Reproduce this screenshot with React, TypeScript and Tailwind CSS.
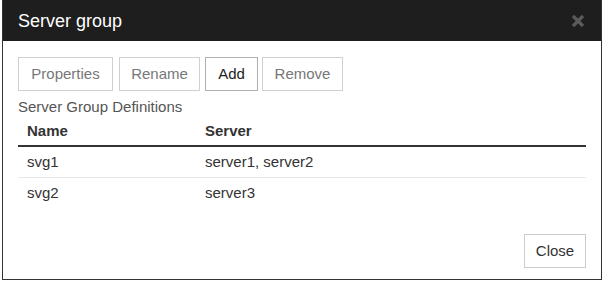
import React from "react";

export default function App() {
  const font = { fontFamily: '"Liberation Sans", Arial, sans-serif' };
  return (
    <div className="w-[604px] h-[282px] bg-white pl-[2px]" style={font}>
      <div className="w-[600px] h-[280px] border-x border-b border-[#333] flex flex-col bg-white">
        <div className="h-[41px] shrink-0 bg-[#1e1e1e] flex items-center justify-between pl-[15px] pr-[16px]">
          <span className="text-white text-[18px] leading-none">Server group</span>
          <svg width="14" height="14" viewBox="0 0 14 14" className="mt-[1px]">
            <path d="M2 2 L12 12 M12 2 L2 12" stroke="#5a5a5a" strokeWidth="3.2" strokeLinecap="butt" />
          </svg>
        </div>
        <div className="flex-1 flex flex-col px-[15px] pt-[16px]">
          <div className="flex">
            <button className="h-[34px] w-[95px] border border-[#d0d0d0] bg-white text-[15px] text-[#777]">Properties</button>
            <button className="h-[34px] w-[81px] ml-[6px] border border-[#d0d0d0] bg-white text-[15px] text-[#777]">Rename</button>
            <button className="h-[34px] w-[53px] ml-[5px] border border-[#b0b0b0] bg-white text-[15px] text-[#222]">Add</button>
            <button className="h-[34px] w-[81px] ml-[4px] border border-[#d0d0d0] bg-white text-[15px] text-[#777]">Remove</button>
          </div>
          <div className="mt-[6px] h-[20px] leading-[20px] text-[15px] text-[#555]">Server Group Definitions</div>
          <div className="text-[15px] text-[#333]">
            <div className="grid grid-cols-[178px_1fr] h-[30px] items-center border-b-2 border-[#333] font-bold">
              <div className="pl-[9px]">Name</div>
              <div className="pl-[9px]">Server</div>
            </div>
            <div className="grid grid-cols-[178px_1fr] h-[31px] items-center border-b border-[#e8e8e8]">
              <div className="pl-[9px]">svg1</div>
              <div className="pl-[9px]">server1, server2</div>
            </div>
            <div className="grid grid-cols-[178px_1fr] h-[31px] items-center">
              <div className="pl-[9px]">svg2</div>
              <div className="pl-[9px]">server3</div>
            </div>
          </div>
          <div className="mt-auto flex justify-end pb-[11px]">
            <button className="h-[34px] w-[62px] border border-[#cccccc] bg-white text-[15px] text-[#333]">Close</button>
          </div>
        </div>
      </div>
    </div>
  );
}
